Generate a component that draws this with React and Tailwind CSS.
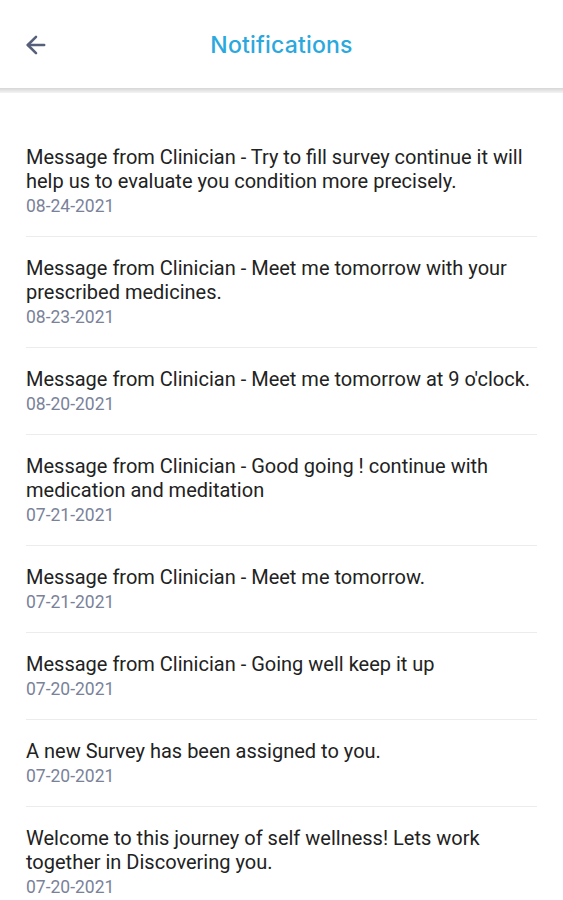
import { ArrowLeft } from "lucide-react";

const items = [
  { msg: "Message from Clinician - Try to fill survey continue it will help us to evaluate you condition more precisely.", date: "08-24-2021" },
  { msg: "Message from Clinician - Meet me tomorrow with your prescribed medicines.", date: "08-23-2021" },
  { msg: "Message from Clinician - Meet me tomorrow at 9 o'clock.", date: "08-20-2021" },
  { msg: "Message from Clinician - Good going ! continue with medication and meditation", date: "07-21-2021" },
  { msg: "Message from Clinician - Meet me tomorrow.", date: "07-21-2021" },
  { msg: "Message from Clinician - Going well keep it up", date: "07-20-2021" },
  { msg: "A new Survey has been assigned to you.", date: "07-20-2021" },
  { msg: "Welcome to this journey of self wellness! Lets work together in Discovering you.", date: "07-20-2021" },
];

export default function App() {
  return (
    <div className="min-h-screen bg-white" style={{ fontFamily: "Roboto, 'Liberation Sans', sans-serif" }}>
      {/* header */}
      <div className="relative h-[88px] flex items-center justify-center bg-white">
        <button className="absolute left-[22px] top-[31px] text-[#56607a]">
          <ArrowLeft size={28} strokeWidth={2.2} />
        </button>
        <h1 className="text-[23px] text-[#2ba8dd] font-medium tracking-[0.2px] mt-[2px]" style={{ fontFamily: "Inter, 'Open Sans', sans-serif" }}>
          Notifications
        </h1>
      </div>
      <div className="h-[5px] bg-gradient-to-b from-[#d6d6d6] to-[#f4f4f4]" />

      {/* list */}
      <div className="px-[26px] pt-[33px]">
        {items.map((it, i) => (
          <div key={i} className={i < items.length - 1 ? "pt-[19px] pb-[17px] border-b border-[#ececec]" : "pt-[19px] pb-[17px]"}>
            <p className="text-[20px] leading-[24px] text-[#222]">{it.msg}</p>
            <p className="text-[17.5px] leading-[26px] text-[#7a829a]">{it.date}</p>
          </div>
        ))}
      </div>
    </div>
  );
}
